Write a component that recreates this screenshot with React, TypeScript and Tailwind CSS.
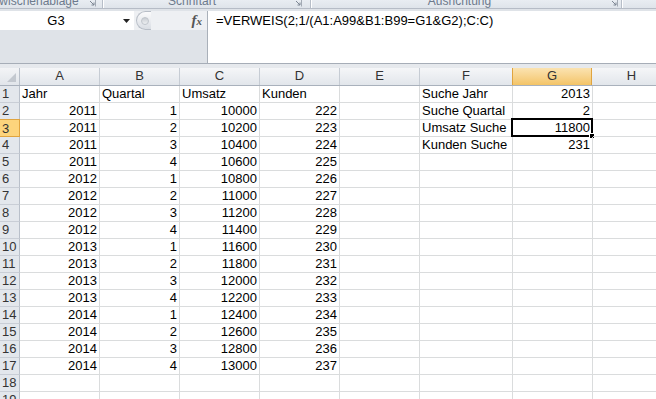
import React from 'react';

const cols = [
  { id: 'A', w: 'w-[80px]', align: 'text-right' },
  { id: 'B', w: 'w-[80px]', align: 'text-right' },
  { id: 'C', w: 'w-[80px]', align: 'text-right' },
  { id: 'D', w: 'w-[80px]', align: 'text-right' },
  { id: 'E', w: 'w-[80px]', align: 'text-right' },
  { id: 'F', w: 'w-[93px]', align: 'text-left' },
  { id: 'G', w: 'w-[80px]', align: 'text-right' },
  { id: 'H', w: 'w-[80px]', align: 'text-right' },
];

const rows: string[][] = [
  ['Jahr', 'Quartal', 'Umsatz', 'Kunden', '', 'Suche Jahr', '2013', ''],
  ['2011', '1', '10000', '222', '', 'Suche Quartal', '2', ''],
  ['2011', '2', '10200', '223', '', 'Umsatz Suche', '11800', ''],
  ['2011', '3', '10400', '224', '', 'Kunden Suche', '231', ''],
  ['2011', '4', '10600', '225', '', '', '', ''],
  ['2012', '1', '10800', '226', '', '', '', ''],
  ['2012', '2', '11000', '227', '', '', '', ''],
  ['2012', '3', '11200', '228', '', '', '', ''],
  ['2012', '4', '11400', '229', '', '', '', ''],
  ['2013', '1', '11600', '230', '', '', '', ''],
  ['2013', '2', '11800', '231', '', '', '', ''],
  ['2013', '3', '12000', '232', '', '', '', ''],
  ['2013', '4', '12200', '233', '', '', '', ''],
  ['2014', '1', '12400', '234', '', '', '', ''],
  ['2014', '2', '12600', '235', '', '', '', ''],
  ['2014', '3', '12800', '236', '', '', '', ''],
  ['2014', '4', '13000', '237', '', '', '', ''],
  ['', '', '', '', '', '', '', ''],
  ['', '', '', '', '', '', '', ''],
];

const Launcher = () => (
  <svg width="8" height="8" viewBox="0 0 8 8" className="shrink-0">
    <path d="M0.5 0.5h7v7" fill="none" stroke="#a3aab4" />
    <path d="M2 2l4 4M3.5 6H6V3.5" fill="none" stroke="#7d8693" />
  </svg>
);

const GroupSep = () => (
  <div className="flex h-full shrink-0">
    <div className="w-px h-full bg-[#b7bec8]" />
    <div className="w-px h-full bg-white" />
  </div>
);

export default function App() {
  return (
    <div className="w-[656px] h-[399px] overflow-hidden bg-white text-black font-['Liberation_Sans',Arial,sans-serif]">
      {/* Ribbon group labels (bottom edge only) */}
      <div className="h-[9px] flex bg-gradient-to-b from-[#e9edf2] to-[#dfe4ea] border-b border-[#b6bcc6] overflow-hidden text-[12px] leading-[12px] text-[#6d7a8c]">
        <div className="w-[102px] flex items-start relative shrink-0">
          <span className="-mt-[5px] -ml-[8px] whitespace-nowrap">Zwischenablage</span>
          <div className="absolute left-[88px] -top-[1px]"><Launcher /></div>
        </div>
        <GroupSep />
        <div className="w-[206px] flex justify-center relative shrink-0">
          <span className="-mt-[5px] ml-[-30px] whitespace-nowrap">Schriftart</span>
          <div className="absolute left-[190px] -top-[1px]"><Launcher /></div>
        </div>
        <GroupSep />
        <div className="w-[309px] flex justify-center relative shrink-0">
          <span className="-mt-[5px] ml-[-14px] whitespace-nowrap">Ausrichtung</span>
          <div className="absolute left-[298px] -top-[1px]"><Launcher /></div>
        </div>
        <GroupSep />
        <div className="flex-1" />
      </div>

      {/* Formula bar */}
      <div className="h-[55px] flex bg-[#dfe3e8] border-b border-[#a6adb7] pt-[2px]">
        <div className="w-[207px] flex flex-col shrink-0">
          <div className="h-[19px] flex items-stretch bg-[#eef0f3]">
            <div className="w-[134px] bg-white flex items-center relative shrink-0">
              <span className="w-[112px] text-center text-[13px] leading-[16px]">G3</span>
              <svg width="7" height="4" viewBox="0 0 7 4" className="absolute left-[123px] top-[8px]">
                <path d="M0 0h7L3.5 4z" fill="#222" />
              </svg>
            </div>
            <div className="w-[15px] h-[19px] rounded-l-full border border-r-0 border-[#b8bec7] bg-gradient-to-b from-[#fbfbfc] to-[#dadee4] flex items-center justify-center shrink-0 ml-[2px]">
              <div className="w-[8px] h-[8px] rounded-full bg-gradient-to-b from-[#c9cdd3] to-[#eef0f2] border border-[#c0c5cc] ml-[2px]" />
            </div>
            <div className="flex-1 flex items-center justify-end pr-[5px]">
              <span className="font-['Liberation_Serif',serif] italic font-bold text-[15px] leading-[15px] text-[#555]">
                f<span className="text-[11px]">x</span>
              </span>
            </div>
          </div>
          <div className="flex-1" />
        </div>
        <div className="flex-1 bg-white border-l border-[#a9b0b9] pl-[8px] pt-[2px] text-[13px] leading-[16px] whitespace-nowrap">
          =VERWEIS(2;1/(A1:A99&amp;B1:B99=G1&amp;G2);C:C)
        </div>
      </div>

      {/* spacing above headers */}
      <div className="h-[4px] bg-[#e6e9ed]" />

      {/* Column headers */}
      <div className="h-[18px] flex border-b border-[#a9b1bc] text-[13px] leading-[16px]">
        <div className="w-[20px] shrink-0 border-r border-[#b9c0ca] bg-gradient-to-b from-[#f3f4f6] to-[#e1e5ea] relative">
          <svg width="9" height="9" viewBox="0 0 9 9" className="absolute right-[3px] bottom-[3px]">
            <path d="M9 0V9H0z" fill="#c3c8cf" />
          </svg>
        </div>
        {cols.map((c) => (
          <div
            key={c.id}
            className={`${c.w} shrink-0 text-center border-r ${
              c.id === 'G'
                ? 'bg-gradient-to-b from-[#fbe3b1] to-[#f3c466] border-[#e0a43f] border-l -ml-px text-[#333]'
                : 'bg-gradient-to-b from-[#f5f6f8] to-[#e2e6eb] border-[#c6ccd4] text-[#333]'
            }`}
          >
            {c.id}
          </div>
        ))}
      </div>

      {/* Rows */}
      {rows.map((r, i) => (
        <div key={i} className="h-[17px] flex text-[13px] leading-[16px]">
          <div
            className={`w-[20px] shrink-0 pl-[2px] border-r border-b ${
              i === 2
                ? 'bg-[#fdd47c] border-[#e0a43f] border-t -mt-px h-[18px] pt-px'
                : 'bg-[#e3e7ec] border-r-[#b9c0ca] border-b-[#c9ced6]'
            } text-[#333]`}
          >
            {i + 1}
          </div>
          {cols.map((c, j) => {
            const text = r[j];
            const isNum = text !== '' && !isNaN(Number(text));
            const selected = i === 2 && c.id === 'G';
            return (
              <div
                key={c.id}
                className={`${c.w} shrink-0 border-r border-b border-[#dadcdd] whitespace-nowrap relative ${
                  isNum ? 'text-right pr-[2px]' : 'text-left pl-[2px]'
                }`}
              >
                {text}
                {selected && (
                  <>
                    <div className="absolute -left-[2px] -top-[2px] -right-[1px] -bottom-[1px] border-2 border-black pointer-events-none" />
                    <div className="absolute -right-[3px] -bottom-[3px] w-[6px] h-[6px] bg-black border border-white" />
                  </>
                )}
              </div>
            );
          })}
        </div>
      ))}
    </div>
  );
}
